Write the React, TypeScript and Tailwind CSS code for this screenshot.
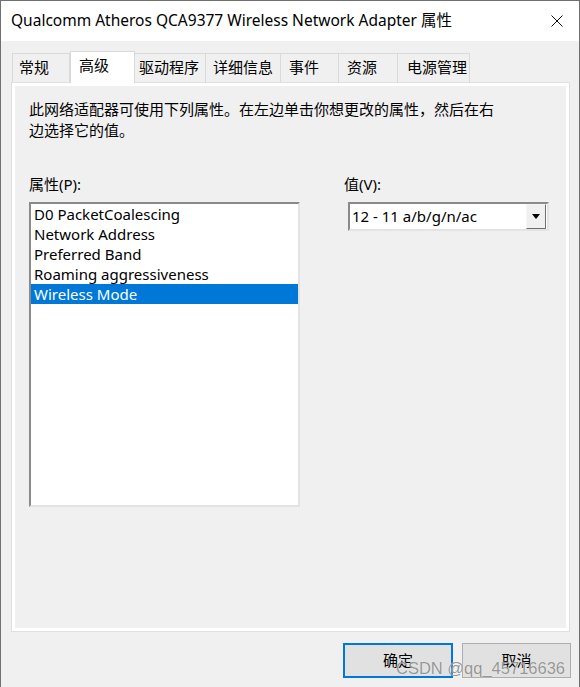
import React from 'react';

const font = { fontFamily: '"Noto Sans", "Noto Sans CJK SC", sans-serif' };

const tabs = [
  { label: '常规', w: 'w-[58px]', pl: 'pl-[6px]' },
  { label: '高级', w: 'w-[65px]', pl: 'pl-[8px]', active: true },
  { label: '驱动程序', w: 'w-[72px]', pl: 'pl-[4px]' },
  { label: '详细信息', w: 'w-[76px]', pl: 'pl-[7px]' },
  { label: '事件', w: 'w-[59px]', pl: 'pl-[8px]' },
  { label: '资源', w: 'w-[60px]', pl: 'pl-[8px]' },
  { label: '电源管理', w: 'w-[73px]', pl: 'pl-[9px]' },
];

const props = [
  'D0 PacketCoalescing',
  'Network Address',
  'Preferred Band',
  'Roaming aggressiveness',
  'Wireless Mode',
];

function TitleBar() {
  return (
    <div className="flex h-[40px] items-center justify-between bg-white pl-[10px] pr-[16px]">
      <span className="text-[15.5px] text-black">Qualcomm Atheros QCA9377 Wireless Network Adapter 属性</span>
      <svg width="12" height="12" viewBox="0 0 12 12">
        <path d="M0.5 0.5 L11.5 11.5 M11.5 0.5 L0.5 11.5" stroke="#111" strokeWidth="1" fill="none" />
      </svg>
    </div>
  );
}

function TabStrip() {
  return (
    <div className="flex h-[31px] items-end pl-[11px]">
      {tabs.map((t) =>
        t.active ? (
          <div
            key={t.label}
            className={`${t.w} ${t.pl} relative z-10 -mb-[1px] flex h-[32px] items-center border border-b-0 border-[#d9d9d9] bg-white pb-[5px] text-[15px] text-black`}
          >
            {t.label}
          </div>
        ) : (
          <div
            key={t.label}
            className={`${t.w} ${t.pl} -ml-[1px] flex h-[29px] items-center border border-b-0 border-[#d9d9d9] bg-[#f0f0f0] pb-[2px] text-[15px] text-black first:ml-0`}
          >
            {t.label}
          </div>
        )
      )}
    </div>
  );
}

function ListBox() {
  return (
    <div className="h-[305px] w-[271px] border-2 border-t-[#8a8a8a] border-l-[#8a8a8a] border-r-[#e3e3e3] border-b-[#e3e3e3] bg-white">
      {props.map((p) => (
        <div
          key={p}
          className={`h-[20px] pl-[3px] text-[15px] leading-[20px] ${
            p === 'Wireless Mode' ? 'bg-[#0078d7] text-white' : 'text-black'
          }`}
        >
          {p}
        </div>
      ))}
    </div>
  );
}

function ComboBox() {
  return (
    <div className="ml-[4px] flex h-[29px] w-[201px] items-center justify-between border-2 border-t-[#8a8a8a] border-l-[#8a8a8a] border-r-[#e3e3e3] border-b-[#e3e3e3] bg-white">
      <span className="pl-[2px] text-[15px] text-black">12 - 11 a/b/g/n/ac</span>
      <div className="mr-[1px] flex h-[25px] w-[20px] items-center justify-center border border-t-[#f5f5f5] border-l-[#f5f5f5] border-r-[#6f6f6f] border-b-[#6f6f6f] bg-[#f0f0f0]">
        <svg width="8" height="5" viewBox="0 0 8 5">
          <path d="M0 0 H8 L4 5 Z" fill="#000" />
        </svg>
      </div>
    </div>
  );
}

function Panel() {
  return (
    <div className="ml-[10px] h-[550px] w-[559px] border border-[#e0e0e0]">
      <div className="h-full border-[3px] border-white bg-[#f0f0f0] px-[14px] pt-[13px]">
        <p className="text-[15px] leading-[21px] text-black">
          此网络适配器可使用下列属性。在左边单击你想更改的属性，然后在右
          <br />
          边选择它的值。
        </p>
        <div className="mt-[33px] flex">
          <div className="flex w-[315px] flex-col">
            <span className="h-[21px] text-[15px] leading-[21px] text-black">属性(P):</span>
            <div className="mt-[7px]">
              <ListBox />
            </div>
          </div>
          <div className="flex flex-col">
            <span className="h-[21px] text-[15px] leading-[21px] text-black">值(V):</span>
            <div className="mt-[7px]">
              <ComboBox />
            </div>
          </div>
        </div>
      </div>
    </div>
  );
}

function Buttons() {
  return (
    <div className="mt-[11px] flex justify-end gap-[9px] pr-[8px]">
      <button className="flex h-[35px] w-[110px] items-center justify-center border-2 border-[#0078d7] bg-[#e1e1e1] text-[15px] text-black">
        确定
      </button>
      <button className="flex h-[35px] w-[109px] items-center justify-center border border-[#adadad] bg-[#e1e1e1] text-[15px] text-black">
        取消
      </button>
    </div>
  );
}

export default function App() {
  return (
    <div
      style={font}
      className="relative h-[687px] w-[580px] overflow-hidden border-x border-t border-[#707070] bg-[#f0f0f0]"
    >
      <TitleBar />
      <div className="pt-[10px]">
        <TabStrip />
        <Panel />
        <Buttons />
      </div>
      <span
        className="absolute left-[395px] top-[657px] whitespace-nowrap text-[16.5px] leading-[20px] text-[#7a7a7a]/80"
        style={{ fontFamily: '"Liberation Sans", sans-serif', textShadow: '0 0 1px #fff' }}
      >
        CSDN @qq_45716636
      </span>
    </div>
  );
}
